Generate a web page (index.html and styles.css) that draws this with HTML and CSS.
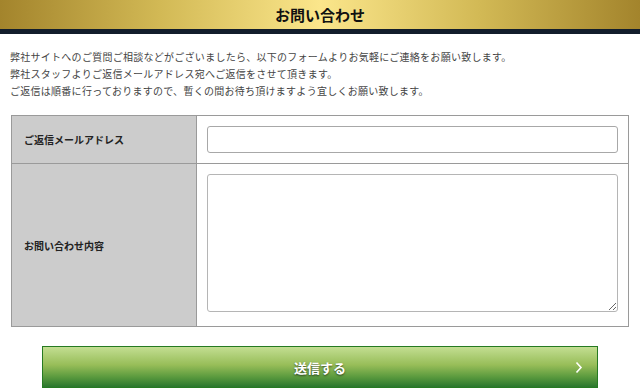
FILE: index.html
```html
<!DOCTYPE html>
<html lang="ja">
<head>
  <meta charset="UTF-8">
  <meta name="viewport" content="width=device-width, initial-scale=1.0">
  <title>お問い合わせ</title>
  <link rel="stylesheet" href="styles.css">
</head>
<body>
  <header class="page-head">
    <h1>お問い合わせ</h1>
  </header>

  <p class="intro">
    弊社サイトへのご質問ご相談などがございましたら、以下のフォームよりお気軽にご連絡をお願い致します。<br>
    弊社スタッフよりご返信メールアドレス宛へご返信をさせて頂きます。<br>
    ご返信は順番に行っておりますので、暫くの間お待ち頂けますよう宜しくお願い致します。
  </p>

  <form class="contact-form">
    <table class="form-table">
      <tr>
        <th>ご返信メールアドレス</th>
        <td><input type="text" class="f-mail"></td>
      </tr>
      <tr>
        <th>お問い合わせ内容</th>
        <td><textarea class="f-body"></textarea></td>
      </tr>
    </table>

    <!-- submit -->
    <button type="button" class="send-btn">
      <span></span>
      <span class="send-label">送信する</span>
      <svg class="send-arrow" width="8" height="13" viewBox="0 0 8 13">
        <path d="M1.5 1.5 L6 6.5 L1.5 11.5" fill="none" stroke="#fff" stroke-width="1.6"/>
      </svg>
    </button>
  </form>
</body>
</html>
```

FILE: styles.css
```css
body {
  margin: 0;
  padding: 0;
  font-family: "Noto Sans CJK JP", "Noto Sans", sans-serif;
  color: #333;
  background-color: #fff;
}

.page-head {
  height: 29px;
  background: linear-gradient(to right, #a3842c, #d2b955 25%, #fbe68b 50%, #d2b955 75%, #a3842c);
  border-bottom: 5px solid #121d2c;
}

.page-head h1 {
  margin: 0;
  text-align: center;
  font-size: 15px;
  line-height: 29px;
  font-weight: bold;
  color: #111;
}

.intro {
  margin: 14px 10px 0;
  font-size: 10px;
  line-height: 17px;
  letter-spacing: 0.27px;
  color: #444;
}

.form-table {
  margin: 16px 11px 0;
  width: calc(100% - 22px);
  border-collapse: collapse;
  border: 1px solid #9a9a9a;
}

.form-table th {
  width: 30%;
  padding: 0 12px;
  background-color: #cccccc;
  border: 1px solid #9a9a9a;
  text-align: left;
  font-size: 10px;
  font-weight: bold;
  color: #222;
}

.form-table td {
  padding: 10px;
  border: 1px solid #9a9a9a;
}

.f-mail {
  display: block;
  width: 100%;
  height: 27px;
  box-sizing: border-box;
  border: 1px solid #a8a8a8;
  border-radius: 3px;
  background-color: #fff;
}

.f-body {
  display: block;
  width: 100%;
  height: 138px;
  margin-bottom: 4px;
  box-sizing: border-box;
  border: 1px solid #b5b5b5;
  border-radius: 3px;
  background-color: #fff;
  resize: vertical;
}

.send-btn {
  display: grid;
  grid-template-columns: 1fr auto 1fr;
  align-items: center;
  width: 556px;
  height: 42px;
  margin: 19px auto 0;
  padding: 0 14px;
  border: 1px solid #267a22;
  background: linear-gradient(#c3de92, #97bd58 45%, #5a9a3e 75%, #2a772e);
  cursor: pointer;
  font-family: inherit;
}

.send-label {
  font-size: 13px;
  font-weight: bold;
  color: #fff;
  text-shadow: 0 1px 2px rgba(0, 0, 0, 0.6);
}

.send-arrow {
  justify-self: end;
}
```
